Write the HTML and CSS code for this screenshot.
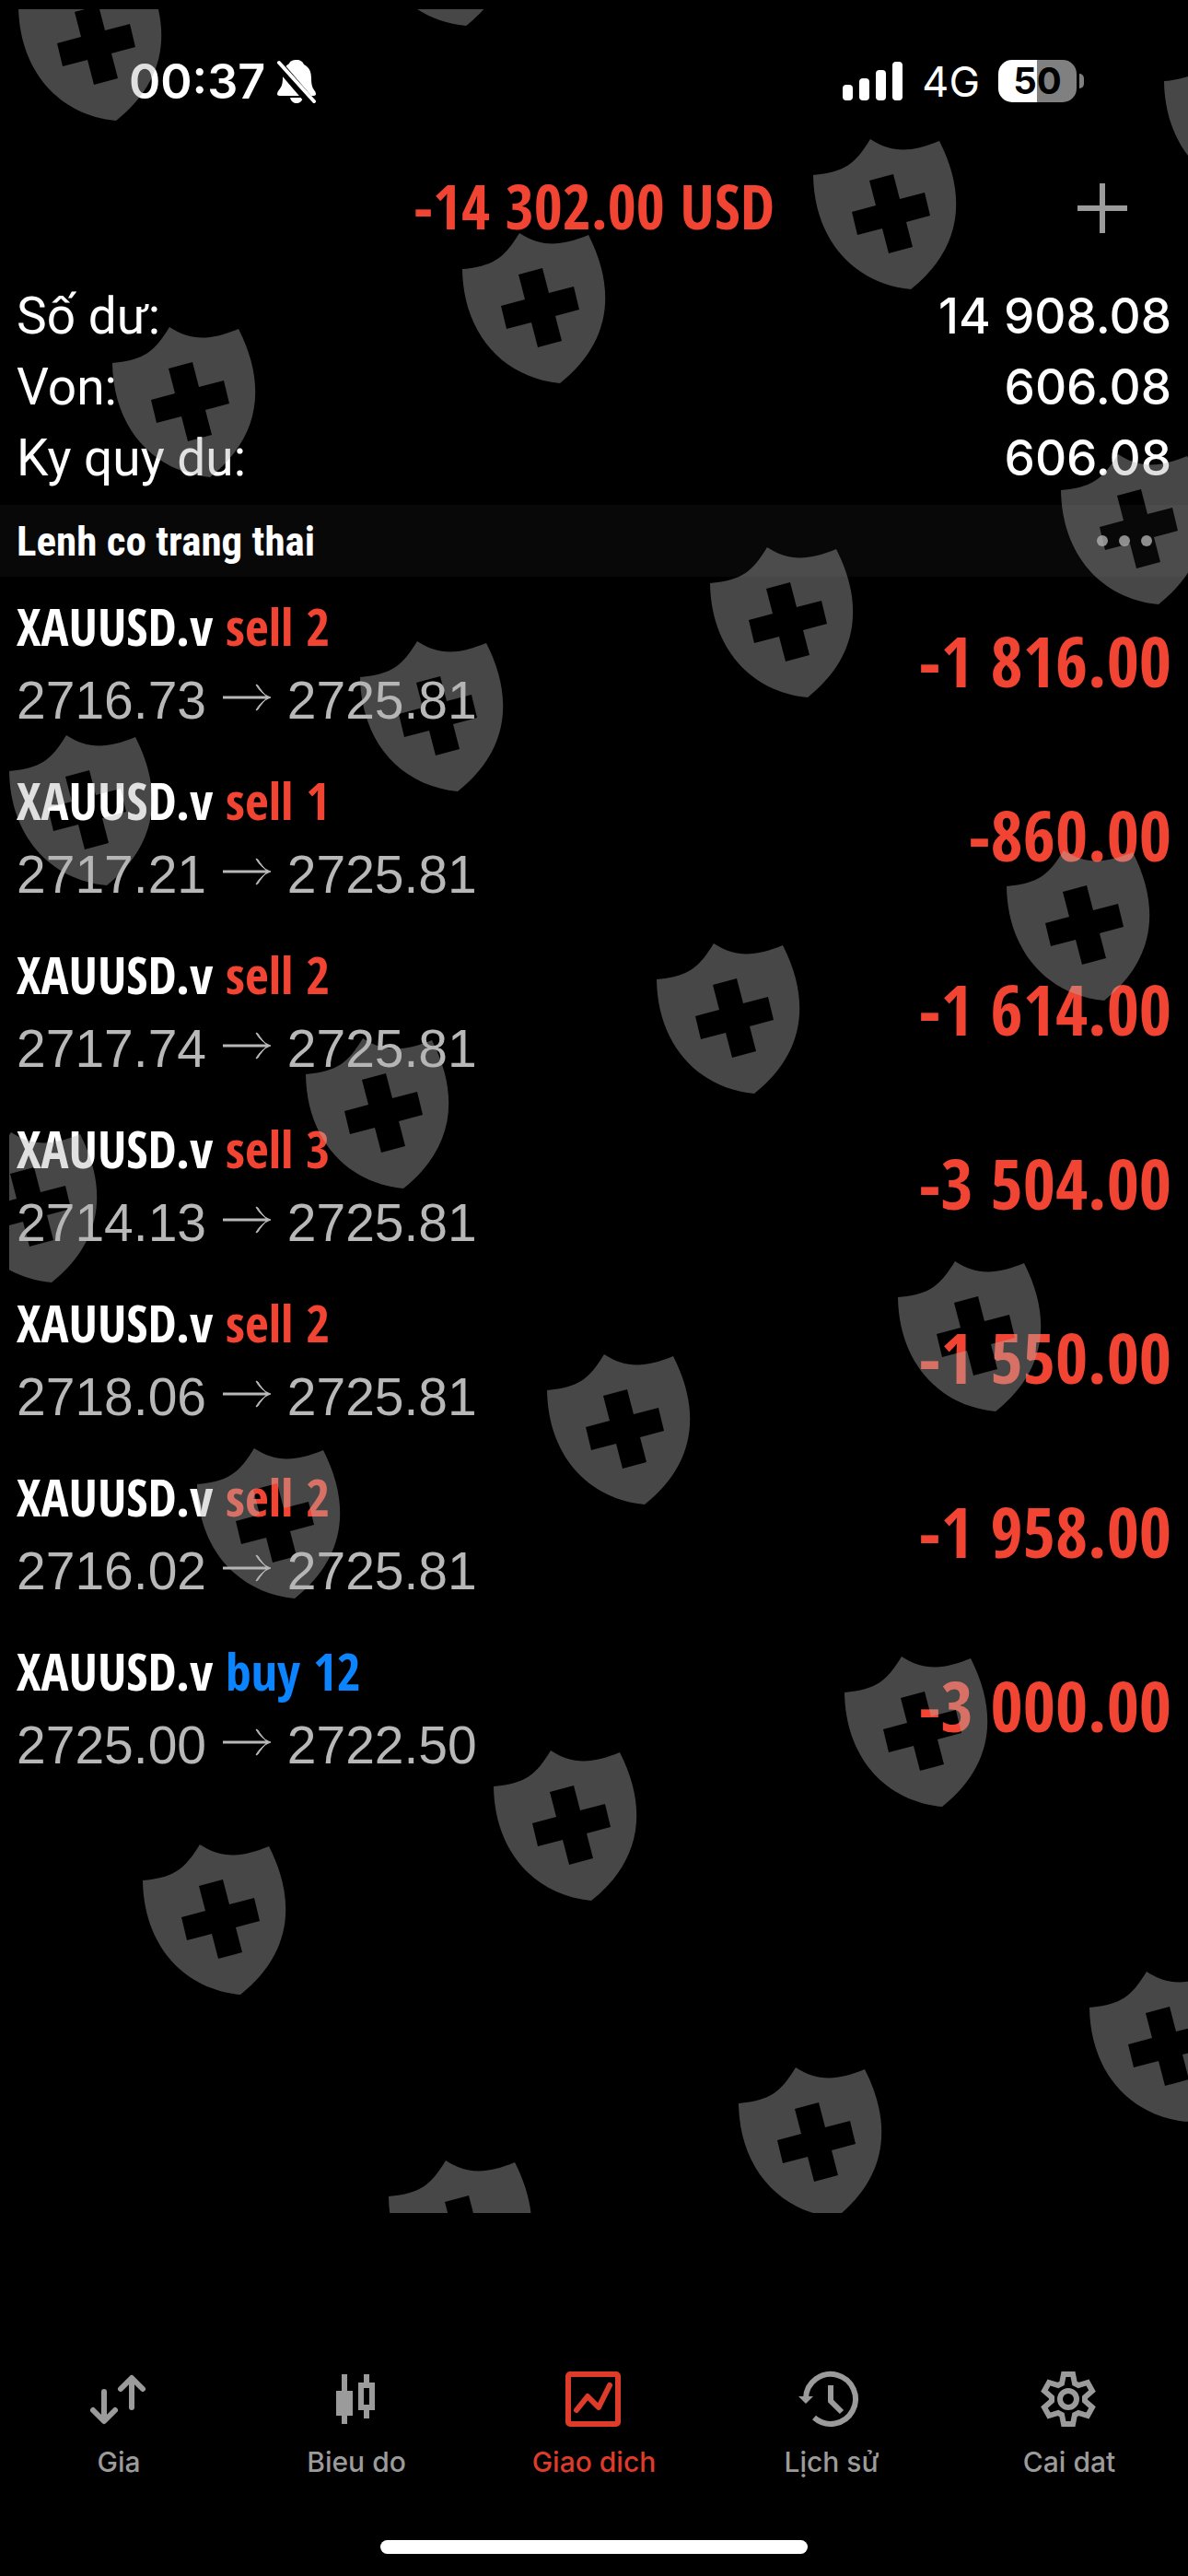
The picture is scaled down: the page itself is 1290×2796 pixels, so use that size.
FILE: index.html
```
<!DOCTYPE html>
<html lang="vi">
<head>
	<meta charset="utf-8">
	<meta name="viewport" content="width=device-width, initial-scale=1">
	<title>Giao dich</title>
	<link rel="stylesheet" href="styles.css">
</head>
<body>
	<div class="status-bar">
		<div class="status-left">
			<span class="clock">00:37</span>
			<svg class="bell" viewBox="0 0 44 48" aria-hidden="true">
				<path d="M22 1c4 0 7 2 8 5c6 3 8 8 8 15c0 9 2 11 4 14c2 4 1 5-3 5H5c-4 0-5-1-3-5c3-4 5-6 5-15c0-8 2-12 7-15c1-3 4-4 8-4z" fill="#fff"/>
				<path d="M15 42h14c-1 4-4 6-7 6s-6-2-7-6z" fill="#fff"/>
				<path d="M-2 1L40 50" stroke="#000" stroke-width="10"/>
				<path d="M3 4L41 46" stroke="#fff" stroke-width="4" stroke-linecap="round"/>
			</svg>
		</div>
		<div class="status-right">
			<svg class="signal" viewBox="0 0 66 42" fill="#fff" aria-hidden="true">
				<rect x="0" y="25" width="11" height="17" rx="4"/>
				<rect x="18" y="18" width="11" height="24" rx="4"/>
				<rect x="36" y="9" width="11" height="33" rx="4"/>
				<rect x="54" y="0" width="11" height="42" rx="4"/>
			</svg>
			<span class="network">4G</span>
			<span class="battery">50</span>
		</div>
	</div>

	<header>
		<h1>-14 302.00 USD</h1>
		<button class="add-btn" aria-label="Add">
			<svg viewBox="0 0 54 54"><path d="M27 0v54M0 27h54" stroke="#9b9b9b" stroke-width="6"/></svg>
		</button>
	</header>

	<dl class="summary">
		<div><dt>Số dư:</dt><dd>14 908.08</dd></div>
		<div><dt>Von:</dt><dd>606.08</dd></div>
		<div><dt>Ky quy du:</dt><dd>606.08</dd></div>
	</dl>

	<div class="section-head">
		<h2>Lenh co trang thai</h2>
		<button class="more-btn" aria-label="More">
			<svg viewBox="0 0 60 12" fill="#8e8e8e"><circle cx="6" cy="6" r="6"/><circle cx="30" cy="6" r="6"/><circle cx="54" cy="6" r="6"/></svg>
		</button>
	</div>

	<svg class="defs" aria-hidden="true">
		<symbol id="arrow" viewBox="0 0 52 30">
			<path d="M0 15h48" stroke="currentColor" stroke-width="3"/>
			<path d="M36 1c3 6 8 11 16 14c-8 3-13 8-16 14l2-1c3-5 7-9 10-13c-3-4-7-8-10-13z" fill="currentColor" stroke="currentColor"/>
		</symbol>
	</svg>

	<ul class="positions">
		<li>
			<div>
				<p class="symbol">XAUUSD.v <span class="sell">sell 2</span></p>
				<p class="price">2716.73 <svg class="arrow"><use href="#arrow"/></svg> 2725.81</p>
			</div>
			<span class="profit">-1 816.00</span>
		</li>
		<li>
			<div>
				<p class="symbol">XAUUSD.v <span class="sell">sell 1</span></p>
				<p class="price">2717.21 <svg class="arrow"><use href="#arrow"/></svg> 2725.81</p>
			</div>
			<span class="profit">-860.00</span>
		</li>
		<li>
			<div>
				<p class="symbol">XAUUSD.v <span class="sell">sell 2</span></p>
				<p class="price">2717.74 <svg class="arrow"><use href="#arrow"/></svg> 2725.81</p>
			</div>
			<span class="profit">-1 614.00</span>
		</li>
		<li>
			<div>
				<p class="symbol">XAUUSD.v <span class="sell">sell 3</span></p>
				<p class="price">2714.13 <svg class="arrow"><use href="#arrow"/></svg> 2725.81</p>
			</div>
			<span class="profit">-3 504.00</span>
		</li>
		<li>
			<div>
				<p class="symbol">XAUUSD.v <span class="sell">sell 2</span></p>
				<p class="price">2718.06 <svg class="arrow"><use href="#arrow"/></svg> 2725.81</p>
			</div>
			<span class="profit">-1 550.00</span>
		</li>
		<li>
			<div>
				<p class="symbol">XAUUSD.v <span class="sell">sell 2</span></p>
				<p class="price">2716.02 <svg class="arrow"><use href="#arrow"/></svg> 2725.81</p>
			</div>
			<span class="profit">-1 958.00</span>
		</li>
		<li>
			<div>
				<p class="symbol">XAUUSD.v <span class="buy">buy 12</span></p>
				<p class="price">2725.00 <svg class="arrow"><use href="#arrow"/></svg> 2722.50</p>
			</div>
			<span class="profit">-3 000.00</span>
		</li>
	</ul>

	<nav class="tab-bar">
		<a href="#gia">
			<svg viewBox="0 0 72 72" fill="none" stroke="currentColor" stroke-width="6" stroke-linecap="round" stroke-linejoin="round">
				<path d="M20 28v30M8 48l12 12l12-12M50 45V15M38 25l12-12l12 12"/>
			</svg>
			Gia
		</a>
		<a href="#bieu-do">
			<svg viewBox="0 0 72 72" fill="currentColor">
				<path d="M20 9h6v18h6v27h-6v9h-6v-9h-6V27h6z"/>
				<path d="M44 9h6v9h6v30h-6v9h-6v-9h-6V18h6zM44 24v18h6V24z" fill-rule="evenodd"/>
			</svg>
			Bieu do
		</a>
		<a href="#giao-dich" class="active">
			<svg viewBox="0 0 72 72" fill="none" stroke="currentColor" stroke-width="6" stroke-linecap="round" stroke-linejoin="round">
				<rect x="8" y="9" width="54" height="54" rx="2"/>
				<path d="M17 48l12-15l12 12l12-24"/>
			</svg>
			Giao dich
		</a>
		<a href="#lich-su">
			<svg viewBox="0 0 72 72" fill="none" stroke="currentColor" stroke-width="6">
				<path d="M8 35A27 27 0 1 1 17 56"/>
				<path d="M0 33h16l-8 8z" fill="currentColor" stroke="none"/>
				<path d="M35 21v17l12 12"/>
			</svg>
			Lịch sử
		</a>
		<a href="#cai-dat">
			<svg viewBox="0 0 72 72" fill="none" stroke="currentColor" stroke-width="6">
				<g transform="translate(35 36)">
					<path d="M-5-27H5L7-17L11-15L21-18L26-9L18-2V2L26 9L21 18L11 15L7 17L5 27H-5L-7 17L-11 15L-21 18L-26 9L-18 2V-2L-26-9L-21-18L-11-15L-7-17Z"/>
					<circle r="9"/>
				</g>
			</svg>
			Cai dat
		</a>
	</nav>
	<div class="home-indicator"></div>

	<!-- shields laid over the page, the text stays readable below -->
	<svg class="watermark" aria-hidden="true">
		<defs>
			<path id="shield" fill-rule="evenodd" d="M1 40C36 37 47 27 63 1C88 17 108 15 138 3C170 66 160 122 107 164C45 158 2 110 1 40ZM62 46L88 39L95 66L122 59L128 84L102 91L109 118L83 125L76 98L49 105L43 80L69 73Z"/>
		</defs>
		<use href="#shield" x="9" y="-43"/>
		<use href="#shield" x="389" y="-146"/>
		<use href="#shield" x="1253" y="38"/>
		<use href="#shield" x="872" y="140"/>
		<use href="#shield" x="491" y="242"/>
		<use href="#shield" x="111" y="344"/>
		<use href="#shield" x="1141" y="482"/>
		<use href="#shield" x="760" y="583"/>
		<use href="#shield" x="380" y="685"/>
		<use href="#shield" x="-1" y="787"/>
		<use href="#shield" x="1082" y="912"/>
		<use href="#shield" x="702" y="1013"/>
		<use href="#shield" x="321" y="1116"/>
		<use href="#shield" x="-61" y="1218"/>
		<use href="#shield" x="964" y="1358"/>
		<use href="#shield" x="583" y="1459"/>
		<use href="#shield" x="203" y="1561"/>
		<use href="#shield" x="906" y="1787"/>
		<use href="#shield" x="525" y="1889"/>
		<use href="#shield" x="144" y="1991"/>
		<use href="#shield" x="1172" y="2129"/>
		<use href="#shield" x="791" y="2233"/>
		<use href="#shield" x="411" y="2334"/>
	</svg>
</body>
</html>
```
FILE: styles.css
```
* {
	box-sizing: border-box;
}

body {
	position: relative;
	display: flex;
	flex-direction: column;
	min-height: 100vh;
	margin: 0;
	background-color: #000;
	color: #fff;
	font-family: Inter, sans-serif;
	overflow-x: hidden;
}

h1, h2, p, dl, dd, ul {
	margin: 0;
	padding: 0;
}

button {
	padding: 0;
	border: none;
	background: none;
	cursor: pointer;
}

svg {
	display: block;
}

.defs {
	display: none;
}

/* status bar */
.status-bar {
	display: flex;
	justify-content: space-between;
	align-items: center;
	height: 176px;
	padding: 0 113px 0 140px;
}

.status-left,
.status-right {
	display: flex;
	align-items: center;
}

.status-left {
	gap: 12px;
}

.clock {
	font-size: 52px;
	font-weight: 600;
}

.bell {
	width: 44px;
	height: 48px;
}

.signal {
	width: 66px;
	height: 42px;
}

.network {
	margin: 0 20px;
	font-size: 45px;
}

.battery {
	position: relative;
	width: 85px;
	height: 46px;
	margin-right: 8px;
	border-radius: 15px;
	background: linear-gradient(to right, #fff 50%, #808080 50%);
	color: #000;
	font-size: 40px;
	font-weight: 700;
	line-height: 46px;
	text-align: center;
}

.battery::after {
	content: "";
	position: absolute;
	top: 15px;
	right: -8px;
	width: 5px;
	height: 16px;
	border-radius: 0 5px 5px 0;
	background-color: #808080;
}

/* title */
header {
	display: grid;
	grid-template-columns: 1fr auto 1fr;
	align-items: center;
	height: 100px;
	padding: 0 66px;
}

h1 {
	grid-column: 2;
	padding-bottom: 6px;
	color: #f14432;
	font-family: "Open Sans Condensed", "Roboto Condensed", sans-serif;
	font-size: 67px;
	font-weight: 600;
	line-height: 90px;
}

.add-btn {
	justify-self: end;
}

.add-btn svg {
	width: 54px;
	height: 54px;
}

/* account summary */
.summary {
	padding: 29px 18px 12px;
	font-size: 53px;
	line-height: 77px;
}

.summary div {
	display: flex;
	justify-content: space-between;
}

.summary dt {
	font-family: Roboto, sans-serif;
	font-size: 55px;
}

.summary dd {
	font-weight: 500;
}

.section-head {
	display: flex;
	justify-content: space-between;
	align-items: center;
	height: 78px;
	padding: 0 39px 0 18px;
	background-color: #080808;
}

h2 {
	font-family: "Roboto Condensed", sans-serif;
	font-size: 45px;
	font-weight: 700;
}

.more-btn svg {
	width: 60px;
	height: 12px;
}

/* open positions */
.positions {
	list-style: none;
}

.positions li {
	display: flex;
	justify-content: space-between;
	align-items: center;
	height: 189px;
	padding: 0 18px;
}

.symbol {
	padding-bottom: 4px;
	font-family: "Open Sans Condensed", "Roboto Condensed", sans-serif;
	font-size: 56px;
	font-weight: 600;
	line-height: 75px;
}

.sell,
.profit {
	color: #f14432;
}

.buy {
	color: #0a84ff;
}

.price {
	color: #b8b8b8;
	font-family: "Liberation Sans", Arial, sans-serif;
	font-size: 57px;
	line-height: 79px;
}

.arrow {
	display: inline-block;
	width: 52px;
	height: 30px;
	margin: 0 2px 8px;
	vertical-align: baseline;
}

.profit {
	padding-bottom: 8px;
	font-family: "Open Sans Condensed", "Roboto Condensed", sans-serif;
	font-size: 76px;
	font-weight: 600;
}

/* bottom tabs */
.tab-bar {
	display: flex;
	margin-top: auto;
}

.tab-bar a {
	display: flex;
	flex: 1;
	flex-direction: column;
	align-items: center;
	gap: 14px;
	color: #9b9b9b;
	font-size: 30px;
	font-weight: 500;
	line-height: 36px;
	text-decoration: none;
}

.tab-bar svg {
	width: 72px;
	height: 72px;
}

.tab-bar .active {
	color: #de3b2a;
}

.home-indicator {
	align-self: center;
	width: 36%;
	height: 15px;
	margin: 67px 0 24px;
	border-radius: 8px;
	background-color: #fff;
}

.watermark {
	position: absolute;
	top: 10px;
	left: 10px;
	width: calc(100% - 10px);
	height: 2392px;
	overflow: hidden;
	fill: #b2b2b2;
	opacity: 0.4;
	pointer-events: none;
}
```
